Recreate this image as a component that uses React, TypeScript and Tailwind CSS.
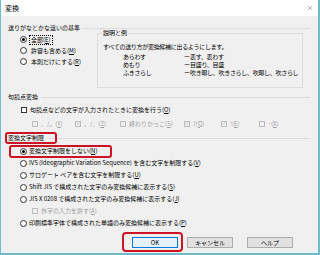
import { X } from "lucide-react";

const FONT = "font-['Noto_Sans_CJK_JP','Noto_Sans',sans-serif]";

function Radio({ on = false }: { on?: boolean }) {
  return (
    <span className="flex h-[7px] w-[7px] shrink-0 items-center justify-center rounded-full border border-[#333] bg-white">
      {on && <span className="h-[3px] w-[3px] rounded-full bg-black" />}
    </span>
  );
}

function Check({ on = false, dim = false }: { on?: boolean; dim?: boolean }) {
  return (
    <span
      className={`flex h-[6px] w-[6px] shrink-0 items-center justify-center border ${
        dim ? "border-[#bcbcbc] bg-[#f0f0f0]" : "border-[#333] bg-white"
      }`}
    >
      {on && (
        <svg viewBox="0 0 6 6" className="h-[5px] w-[5px]">
          <path d="M1 3.2 L2.4 4.5 L5 1.5" fill="none" stroke={dim ? "#a8a8a8" : "#000"} strokeWidth="0.9" />
        </svg>
      )}
    </span>
  );
}

function K({ k }: { k: string }) {
  return (
    <>
      (<span className="underline">{k}</span>)
    </>
  );
}

function GroupHeader({ label }: { label: string }) {
  return (
    <div className="flex h-[8px] items-center gap-[3px]">
      <span className="whitespace-nowrap">{label}</span>
      <div className="h-px flex-1 bg-[#dcdcdc]" />
    </div>
  );
}

function RadioRow({ on, children }: { on?: boolean; children: React.ReactNode }) {
  return (
    <div className="flex h-[12px] items-center gap-[2px] whitespace-nowrap">
      <Radio on={on} />
      <span>{children}</span>
    </div>
  );
}

const examples = [
  ["あらわす", "表す、表わす"],
  ["めもり", "目盛り、目盛"],
  ["ふきさらし", "吹き曝し、吹きさらし、吹曝し、吹さらし"],
];

export default function App() {
  return (
    <div
      className={`relative h-[255px] w-[320px] overflow-hidden border-b-2 border-l border-r-2 border-[#6cbcc9] bg-[#f0f0f0] text-[6px] leading-none text-black ${FONT}`}
    >
      {/* title bar */}
      <div className="flex h-[16px] items-center justify-between bg-white pl-[4px] pr-[5px]">
        <span className="text-[7px]">変換</span>
        <X className="h-[6px] w-[6px] text-[#333]" strokeWidth={1.6} />
      </div>

      <div className="pl-[7px] pr-[8px]">
        <div className="mt-[8px]">
          <GroupHeader label="送りがなとかな違いの基準" />
        </div>
        <div className="mt-[1px] flex h-[55px]">
          <div className="flex w-[89px] flex-col pl-[12px] pt-[1px]">
            <div className="flex h-[11px] items-center gap-[2px] whitespace-nowrap">
              <Radio on />
              <span className="border border-dotted border-black px-[1px] py-[1px]">
                全部<K k="E" />
              </span>
            </div>
            <div className="flex h-[11px] items-center gap-[2px] whitespace-nowrap">
              <Radio />
              <span className="px-[2px]">
                許容も含める<K k="M" />
              </span>
            </div>
            <div className="flex h-[11px] items-center gap-[2px] whitespace-nowrap">
              <Radio />
              <span className="px-[2px]">
                本則だけにする<K k="R" />
              </span>
            </div>
          </div>
          <div className="relative mr-[7px] flex-1 border border-[#dcdcdc] pl-[5px] pt-[9px]">
            <span className="absolute -top-[4px] left-[4px] bg-[#f0f0f0] px-[1px]">説明と例</span>
            <div className="flex h-[8px] items-center whitespace-nowrap tracking-[-0.3px]">
              すべての送り方が変換候補に出るようにします。
            </div>
            <div className="mt-[2px] pl-[20px]">
              {examples.map(([a, b]) => (
                <div key={a} className="flex h-[8px] items-center whitespace-nowrap tracking-[-0.3px]">
                  <span className="w-[61px]">{a}</span>
                  <span className="w-[6px]">ー</span>
                  <span>{b}</span>
                </div>
              ))}
            </div>
          </div>
        </div>

        <div className="mt-[5px]">
          <GroupHeader label="句読点変換" />
        </div>
        <div className="mt-[3px] flex h-[11px] items-center gap-[3px] whitespace-nowrap pl-[13px]">
          <Check />
          <span>
            句読点などの文字が入力されたときに変換を行う<K k="O" />
          </span>
        </div>
        <div className="mt-[3px] flex h-[11px] items-center whitespace-nowrap pl-[24px] text-[#a0a0a0]">
          <div className="flex w-[43px] items-center gap-[3px]">
            <Check dim />
            <span>、/。<K k="Y" /></span>
          </div>
          <div className="flex w-[45px] items-center gap-[3px]">
            <Check dim on />
            <span>、/．<K k="Z" /></span>
          </div>
          <div className="flex w-[64px] items-center gap-[3px]">
            <Check dim />
            <span>終わりかっこ<K k="S" /></span>
          </div>
          <div className="flex w-[37px] items-center gap-[3px]">
            <Check dim on />
            <span>?<K k="Q" /></span>
          </div>
          <div className="flex w-[38px] items-center gap-[3px]">
            <Check dim on />
            <span>!<K k="E" /></span>
          </div>
          <div className="flex items-center gap-[3px]">
            <Check dim />
            <span>･<K k="X" /></span>
          </div>
        </div>

        <div className="mt-[5px]">
          <GroupHeader label="変換文字制限" />
        </div>
        <div className="mt-[3px] flex flex-col pl-[12px]">
          <RadioRow on>
            変換文字制限をしない<K k="N" />
          </RadioRow>
          <RadioRow>
            IVS (Ideographic Variation Sequence) を含む文字を制限する<K k="V" />
          </RadioRow>
          <RadioRow>
            サロゲート ペアを含む文字を制限する<K k="U" />
          </RadioRow>
          <RadioRow>
            Shift JIS で構成された文字のみ変換候補に表示する<K k="S" />
          </RadioRow>
          <RadioRow>
            JIS X 0208 で構成された文字のみ変換候補に表示する<K k="J" />
          </RadioRow>
          <div className="flex h-[12px] items-center gap-[3px] whitespace-nowrap pl-[12px] text-[#a0a0a0]">
            <Check dim />
            <span>
              外字の入力を許す<K k="A" />
            </span>
          </div>
          <RadioRow>
            印刷標準字体で構成された単語のみ変換候補に表示する<K k="P" />
          </RadioRow>
        </div>

        <div className="mt-[8px] flex">
          <button
            type="button"
            className="ml-[124px] flex h-[11px] w-[46px] items-center justify-center border border-[#0078d7] bg-[#e5f1fb]"
          >
            OK
          </button>
          <button
            type="button"
            className="ml-[9px] flex h-[11px] w-[46px] items-center justify-center border border-[#adadad] bg-[#e1e1e1]"
          >
            キャンセル
          </button>
          <button
            type="button"
            className="ml-[14px] flex h-[11px] w-[46px] items-center justify-center border border-[#adadad] bg-[#e1e1e1]"
          >
            ヘルプ
          </button>
        </div>
      </div>

      {/* red annotation marks */}
      <div className="pointer-events-none absolute left-[4px] top-[132px] h-[12px] w-[52px] rounded-[3px] border-2 border-[#cc1424]" />
      <div className="pointer-events-none absolute left-[8px] top-[145px] h-[13px] w-[103px] rounded-[3px] border-2 border-[#cc1424]" />
      <div className="pointer-events-none absolute left-[121px] top-[232px] h-[20px] w-[61px] rounded-[4px] border-2 border-[#cc1424]" />
    </div>
  );
}
